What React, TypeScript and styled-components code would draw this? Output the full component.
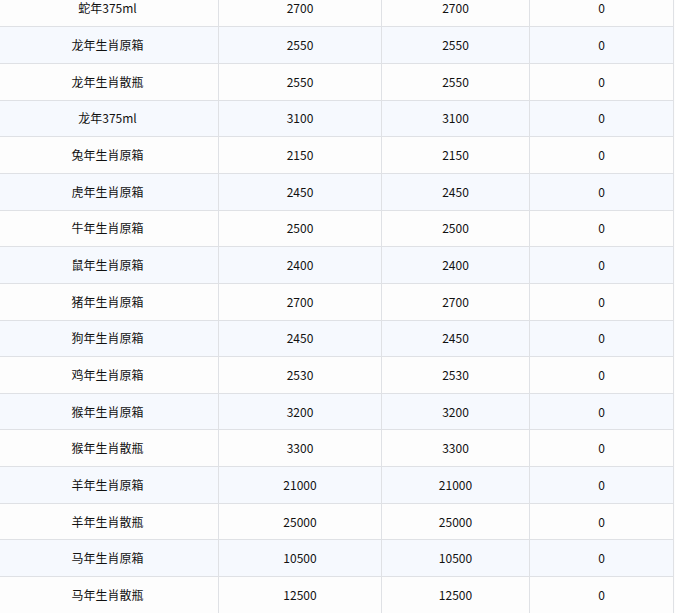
import styled, { createGlobalStyle } from "styled-components";

const GlobalStyle = createGlobalStyle`
    html, body {
        margin: 0;
        padding: 0;
        background: #fdfdfd;
        overflow: hidden;
    }
`;

const Table = styled.div`
    margin-top: -9.4px;
    width: 674px;
    font-family: "Noto Sans CJK SC", "Noto Sans", sans-serif;
    font-size: 12px;
    color: #111;
`;

const Row = styled.div<{ $striped: boolean }>`
    display: grid;
    grid-template-columns: 219px 163px 148px 144px;
    height: 36.67px;
    box-sizing: border-box;
    border-bottom: 1px solid #dfe1e5;
    background: ${(props) => (props.$striped ? "#f6f9fe" : "#fdfdfd")};
`;

const Cell = styled.div`
    display: flex;
    align-items: center;
    justify-content: center;
    padding-bottom: 1px;
    border-right: 1px solid #dfe1e5;
    white-space: nowrap;
`;

const NameCell = styled(Cell)`
    padding-right: 3px;
`;

// 商品, 价格, 价格, 库存
const rows: [string, number][] = [
    ["蛇年375ml", 2700],
    ["龙年生肖原箱", 2550],
    ["龙年生肖散瓶", 2550],
    ["龙年375ml", 3100],
    ["兔年生肖原箱", 2150],
    ["虎年生肖原箱", 2450],
    ["牛年生肖原箱", 2500],
    ["鼠年生肖原箱", 2400],
    ["猪年生肖原箱", 2700],
    ["狗年生肖原箱", 2450],
    ["鸡年生肖原箱", 2530],
    ["猴年生肖原箱", 3200],
    ["猴年生肖散瓶", 3300],
    ["羊年生肖原箱", 21000],
    ["羊年生肖散瓶", 25000],
    ["马年生肖原箱", 10500],
    ["马年生肖散瓶", 12500],
];

function App() {
    return (
        <>
            <GlobalStyle />
            <Table>
                {rows.map(([name, price], i) => (
                    <Row key={name} $striped={i % 2 === 1}>
                        <NameCell>{name}</NameCell>
                        <Cell>{price}</Cell>
                        <Cell>{price}</Cell>
                        <Cell>0</Cell>
                    </Row>
                ))}
            </Table>
        </>
    );
}

export default App;
